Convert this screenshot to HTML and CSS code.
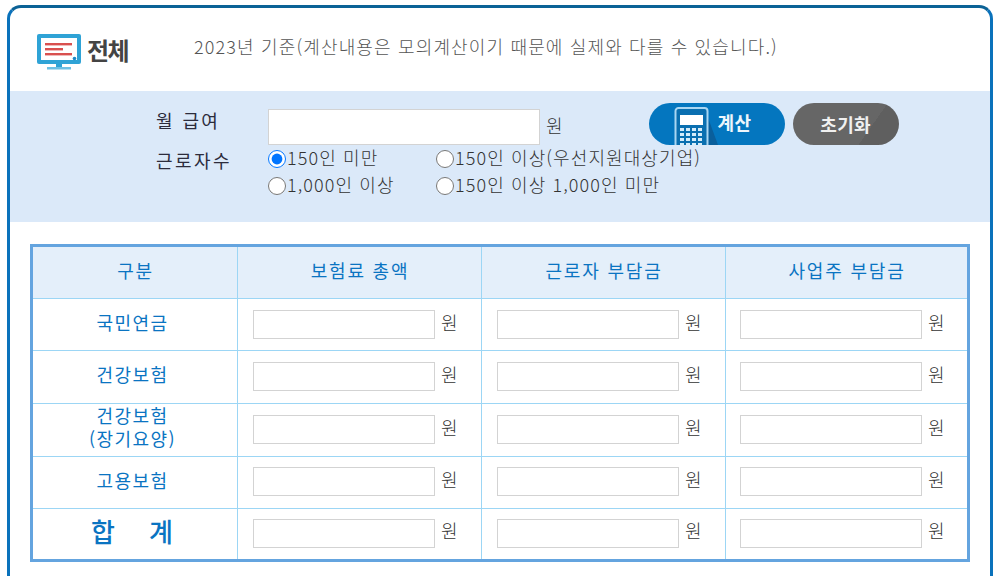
FILE: index.html
```html
<!DOCTYPE html>
<html lang="ko">
<head>
<meta charset="utf-8">
<title>4대보험 모의계산</title>
<link rel="stylesheet" href="styles.css">
</head>
<body>
<div class="frame">
  <header class="head">
    <div class="brand">
      <svg class="brand-icon" width="44" height="36" viewBox="0 0 44 36">
        <rect x="0" y="0" width="44" height="30" rx="2" fill="#2fa3d6"/>
        <rect x="4" y="4" width="36" height="22" fill="#fff"/>
        <rect x="8" y="9" width="27" height="2.4" fill="#d9504f"/>
        <rect x="8" y="14" width="18" height="2.4" fill="#d9504f"/>
        <rect x="8" y="19" width="27" height="2.4" fill="#d9504f"/>
        <circle cx="37.500" cy="24.500" r="1.800" fill="#1e88c7"/>
        <rect x="19" y="30" width="6" height="3" fill="#2fa3d6"/>
        <rect x="10" y="33" width="24" height="2.500" fill="#6cc0e4"/>
      </svg>
      <span class="brand-text">전체</span>
    </div>
    <p class="notice">2023년 기준(계산내용은 모의계산이기 때문에 실제와 다를 수 있습니다.)</p>
  </header>

  <section class="band">
    <div class="row-pay">
      <label class="label label-pay" for="pay">월 급여</label>
      <input id="pay" class="pay-input" type="text">
      <span class="unit">원</span>
      <div class="actions">
        <button class="btn btn-calc" type="button">
          <svg class="calc-icon" width="44" height="42" viewBox="0 0 44 42">
            <polygon points="33,12 44,42 33,42" fill="#0a5f9c"/>
            <path d="M1.500 42V8a3 3 0 0 1 3-3h26a3 3 0 0 1 3 3v34" fill="#0a6fb0" stroke="#a9d6f2" stroke-width="2"/>
            <rect x="6" y="12" width="23" height="10" fill="#fff"/>
            <g fill="#d5ecfa">
              <rect x="6" y="25" width="4" height="3"/><rect x="12" y="25" width="4" height="3"/><rect x="18" y="25" width="4" height="3"/><rect x="24" y="25" width="4" height="3"/>
              <rect x="6" y="30" width="4" height="3"/><rect x="12" y="30" width="4" height="3"/><rect x="18" y="30" width="4" height="3"/><rect x="24" y="30" width="4" height="3"/>
              <rect x="6" y="35" width="4" height="3"/><rect x="12" y="35" width="4" height="3"/><rect x="18" y="35" width="4" height="3"/><rect x="24" y="35" width="4" height="3"/>
              <rect x="6" y="40" width="4" height="2"/><rect x="12" y="40" width="4" height="2"/><rect x="18" y="40" width="4" height="2"/><rect x="24" y="40" width="4" height="2"/>
            </g>
          </svg>
          <span>계산</span>
        </button>
        <button class="btn btn-reset" type="button">초기화</button>
      </div>
    </div>
    <div class="row-size">
      <span class="label label-size">근로자수</span>
      <div class="radios">
        <label class="radio"><input type="radio" name="size" checked>150인 미만</label>
        <label class="radio"><input type="radio" name="size">150인 이상(우선지원대상기업)</label>
        <label class="radio"><input type="radio" name="size">1,000인 이상</label>
        <label class="radio"><input type="radio" name="size">150인 이상 1,000인 미만</label>
      </div>
    </div>
  </section>

  <section class="table-wrap">
    <table class="calc-table">
      <thead>
        <tr><th class="col-name">구분</th><th class="col-val">보험료 총액</th><th class="col-val">근로자 부담금</th><th>사업주 부담금</th></tr>
      </thead>
      <tbody>
        <tr class="r1">
          <th class="name">국민연금</th>
          <td><input class="cell-input" type="text"><span class="unit">원</span></td>
          <td><input class="cell-input" type="text"><span class="unit">원</span></td>
          <td><input class="cell-input" type="text"><span class="unit">원</span></td>
        </tr>
        <tr class="r2">
          <th class="name">건강보험</th>
          <td><input class="cell-input" type="text"><span class="unit">원</span></td>
          <td><input class="cell-input" type="text"><span class="unit">원</span></td>
          <td><input class="cell-input" type="text"><span class="unit">원</span></td>
        </tr>
        <tr class="r2">
          <th class="name name-tight">건강보험<br>(장기요양)</th>
          <td><input class="cell-input" type="text"><span class="unit">원</span></td>
          <td><input class="cell-input" type="text"><span class="unit">원</span></td>
          <td><input class="cell-input" type="text"><span class="unit">원</span></td>
        </tr>
        <tr class="r1 r-up">
          <th class="name">고용보험</th>
          <td><input class="cell-input" type="text"><span class="unit">원</span></td>
          <td><input class="cell-input" type="text"><span class="unit">원</span></td>
          <td><input class="cell-input" type="text"><span class="unit">원</span></td>
        </tr>
        <tr class="r1 r-up">
          <th class="name name-total">합&nbsp;&nbsp;&nbsp;&nbsp;계</th>
          <td><input class="cell-input" type="text"><span class="unit">원</span></td>
          <td><input class="cell-input" type="text"><span class="unit">원</span></td>
          <td><input class="cell-input" type="text"><span class="unit">원</span></td>
        </tr>
      </tbody>
    </table>
  </section>
</div>
</body>
</html>
```
FILE: styles.css
```css
* { box-sizing: border-box; }
html, body { margin: 0; padding: 0; background: #fff; overflow: hidden; }
body {
  width: 1002px;
  height: 576px;
  padding: 5px 0 0 7px;
  font-family: "Noto Sans CJK KR", "Liberation Sans", sans-serif;
  font-size: 18px;
  color: #333;
  overflow: hidden;
}
.frame {
  width: 986px;
  height: 571px;
  border: 3px solid #0a72bb;
  border-top-color: #0b6296;
  border-bottom: 0;
  border-radius: 14px 14px 0 0;
  background: #fff;
}
.head {
  height: 83px;
  display: flex;
  align-items: flex-start;
}
.brand {
  display: flex;
  align-items: center;
  gap: 6px;
  margin: 26px 0 0 27px;
  width: 157px;
}
.brand-icon { display: block; flex: none; }
.brand-text {
  font-size: 24px;
  line-height: 30px;
  font-weight: 700;
  color: #444;
  letter-spacing: -1.5px;
  margin-top: -4px;
}
.notice {
  margin: 25px 0 0 0;
  line-height: 26px;
  color: #555;
  font-weight: 300;
  letter-spacing: 1.15px;
}
.band {
  height: 131px;
  width: 980px;
  background: #dbe9f9;
  padding: 12px 0 0 146px;
}
.row-pay { display: flex; align-items: flex-start; height: 42px; }
.label { width: 112px; flex: none; line-height: 26px; color: #2c2c3c; letter-spacing: 2.4px; }
.label-pay { padding-top: 4px; }
.pay-input {
  width: 272px;
  height: 36px;
  margin-top: 6px;
  border: 1px solid #d3d3d3;
  background: #fff;
  padding: 0;
}
.unit { line-height: 26px; color: #333; font-weight: 300; }
.row-pay > .unit { margin: 9px 0 0 6px; }
.actions { display: flex; gap: 8px; margin-left: 86px; }
.btn {
  height: 42px;
  border: 0;
  padding: 0;
  border-radius: 21px;
  font-family: inherit;
  font-size: 18px;
  font-weight: 700;
  color: #fff;
  display: flex;
  align-items: center;
  justify-content: center;
  overflow: hidden;
}
.btn-calc {
  width: 136px;
  background: #0476bf;
  justify-content: flex-start;
  padding-left: 25px;
}
.calc-icon { display: block; align-self: flex-end; flex: none; }
.btn-calc span { margin: 0 0 4px 0; letter-spacing: .5px; color: #eef6fc; }
.btn-reset {
  width: 106px;
  background: linear-gradient(125deg, #666 0 70%, #5f5f5f 70%);
  color: #f0f0f0;
  letter-spacing: .3px;
}
.row-size { display: flex; }
.label-size { margin-top: 2px; }
.radios {
  display: grid;
  grid-template-columns: 168px auto;
  grid-auto-rows: 27px;
  margin-top: -2px;
}
.radio { display: flex; align-items: center; color: #333; font-weight: 300; white-space: nowrap; letter-spacing: 1.1px; }
.radio input { width: 18px; height: 18px; margin: 4px 1px 0 0; flex: none; }
.table-wrap { padding: 22px 0 0 20px; }
.calc-table {
  width: 940px;
  table-layout: fixed;
  border-collapse: collapse;
  border: 3px solid #64a4df;
}
.calc-table th, .calc-table td { border: 1px solid #9cd6f5; padding: 0; }
.calc-table thead th {
  height: 53px;
  background: #e4effa;
  color: #0a74c2;
  font-weight: 400;
  letter-spacing: 1.8px;
  padding: 0 0 6px 1px;
}
.col-name { width: 206px; }
.col-val { width: 244px; }
.calc-table .name { color: #0a74c2; font-weight: 400; line-height: 24px; letter-spacing: 1.4px; padding: 0 5px 6px 0; }
.calc-table .name-tight { line-height: 23px; }
.calc-table .name-total { font-size: 26px; font-weight: 500; letter-spacing: 1px; }
.r1 { height: 52px; }
.r2 { height: 53px; }
.calc-table td { padding: 0 0 1px 15px; white-space: nowrap; }
.calc-table .r2 td { padding-bottom: 2px; }
.calc-table .r-up td { padding-bottom: 3px; }
.calc-table td:last-child { padding-left: 14px; }
.cell-input {
  width: 182px;
  height: 29px;
  border: 1px solid #d3d3d3;
  background: #fff;
  padding: 0;
  vertical-align: middle;
}
.calc-table td .unit { margin-left: 6px; vertical-align: middle; position: relative; top: -3px; }
```
